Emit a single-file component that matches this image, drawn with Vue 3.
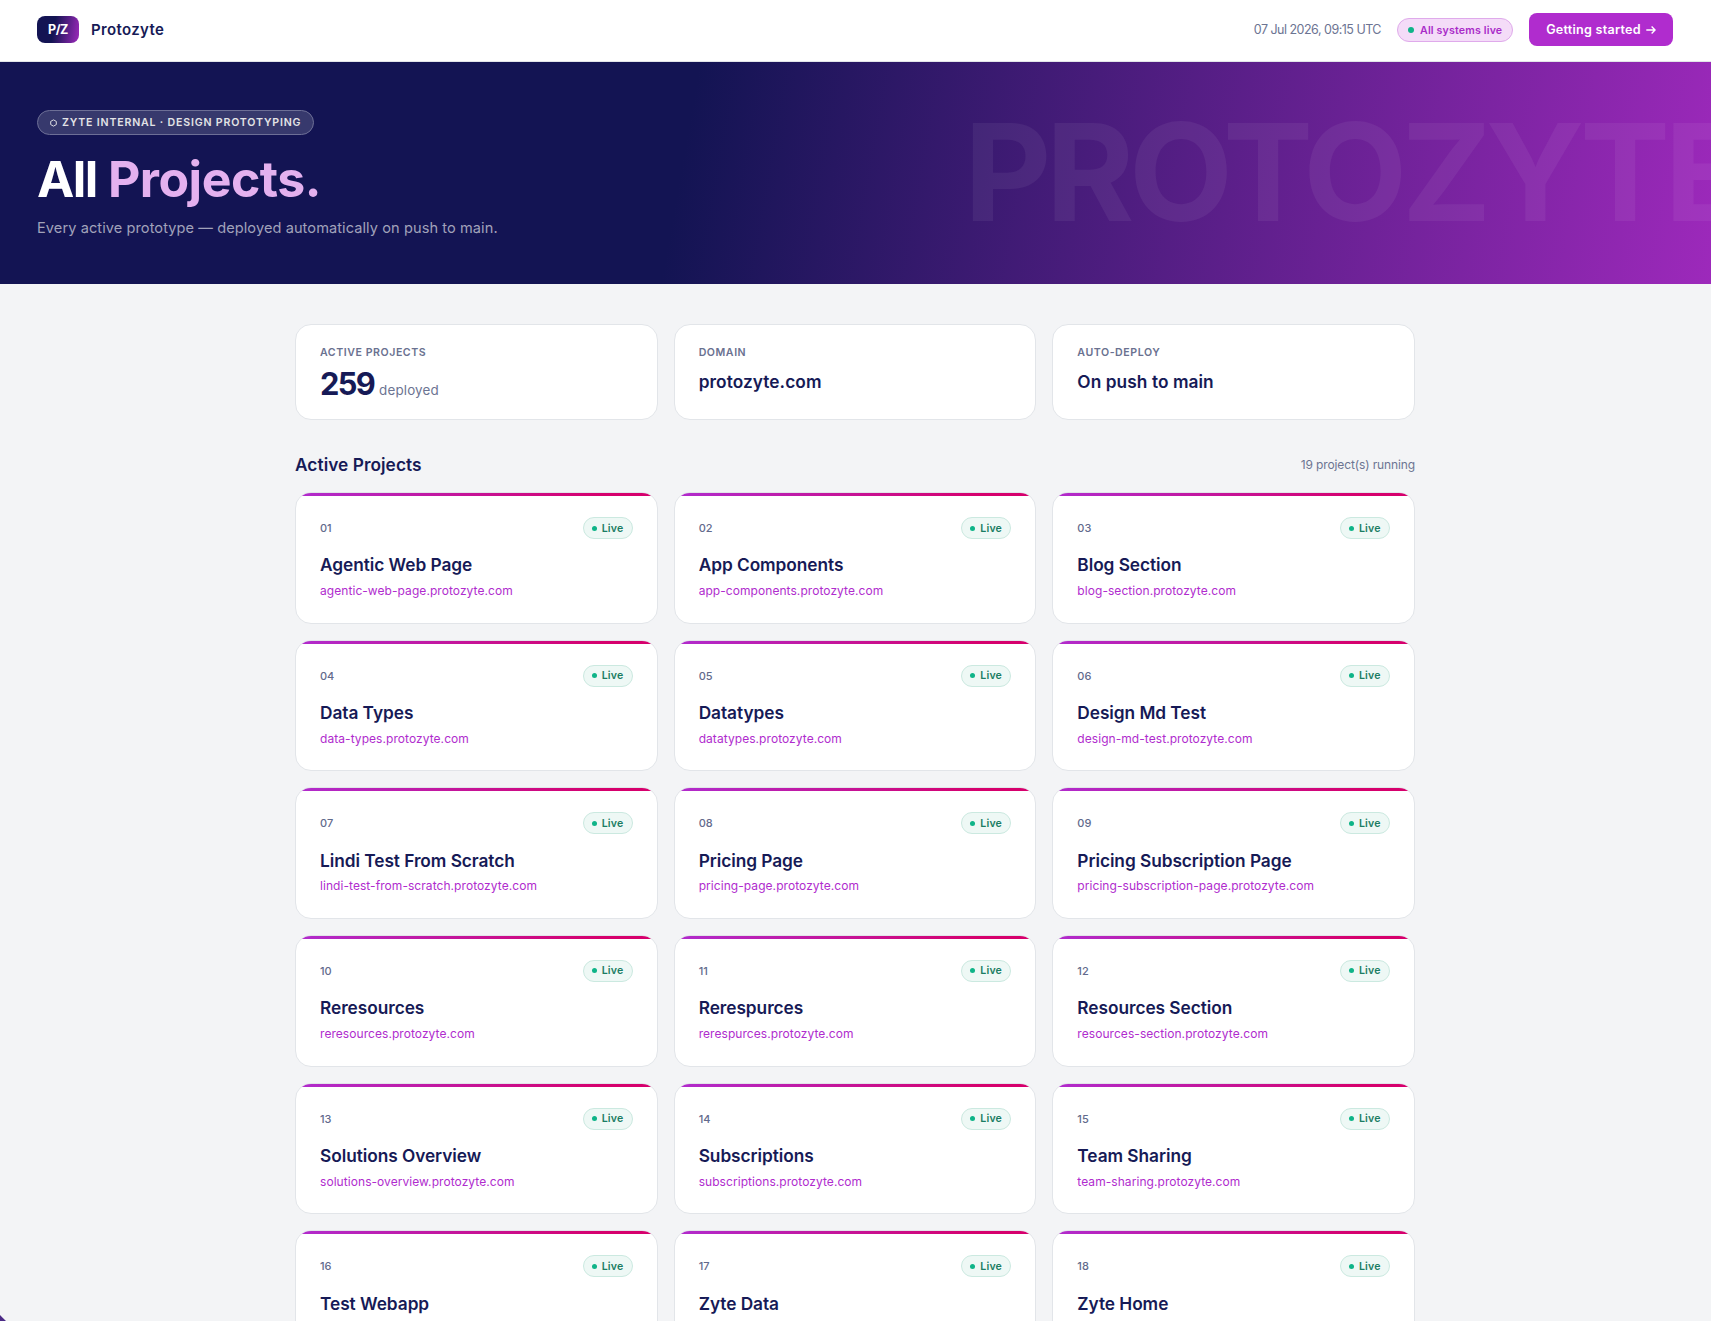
<template>
  <div class="page">
    <header class="topbar">
      <div class="brand">
        <span class="logo"><span>P/Z</span></span>
        <span class="brand-name">Protozyte</span>
      </div>
      <div class="topbar-right">
        <span class="date">07 Jul 2026, 09:15 UTC</span>
        <span class="systems"><i class="dot"></i><span>All systems live</span></span>
        <button class="start-btn">
          <span>Getting started</span>
          <svg width="10" height="10" viewBox="0 0 10 10" fill="none" stroke="currentColor" stroke-width="1.4">
            <path d="M0.3 5H9M5.6 1.5L9.1 5L5.6 8.5" />
          </svg>
        </button>
      </div>
    </header>

    <section class="hero">
      <div class="watermark">PROTOZYTE</div>
      <div class="eyebrow">
        <svg width="7" height="8" viewBox="0 0 8 9" fill="none" stroke="currentColor" stroke-width="1.1">
          <path d="M4 0.9L7.2 2.7V6.3L4 8.1L0.8 6.3V2.7Z" />
        </svg>
        <span>ZYTE INTERNAL · DESIGN PROTOTYPING</span>
      </div>
      <h1>All <em>Projects.</em></h1>
      <p>Every active prototype — deployed automatically on push to main.</p>
    </section>

    <main class="content">
      <div class="stats">
        <div class="stat">
          <div class="stat-label">ACTIVE PROJECTS</div>
          <div class="stat-number">259 <small>deployed</small></div>
        </div>
        <div class="stat">
          <div class="stat-label">DOMAIN</div>
          <div class="stat-text">protozyte.com</div>
        </div>
        <div class="stat">
          <div class="stat-label">AUTO-DEPLOY</div>
          <div class="stat-text">On push to main</div>
        </div>
      </div>

      <div class="section-head">
        <h2>Active Projects</h2>
        <span>19 project(s) running</span>
      </div>

      <div class="projects">
        <article v-for="(p, i) in projects" :key="p.slug" class="card">
          <div class="card-top">
            <span class="num">{{ String(i + 1).padStart(2, "0") }}</span>
            <span class="live"><i class="dot"></i><span>Live</span></span>
          </div>
          <h3>{{ p.name }}</h3>
          <a>{{ p.slug }}.protozyte.com</a>
        </article>
      </div>
    </main>

    <div class="corner"></div>
  </div>
</template>

<script setup>
const names = [
  "Agentic Web Page",
  "App Components",
  "Blog Section",
  "Data Types",
  "Datatypes",
  "Design Md Test",
  "Lindi Test From Scratch",
  "Pricing Page",
  "Pricing Subscription Page",
  "Reresources",
  "Rerespurces",
  "Resources Section",
  "Solutions Overview",
  "Subscriptions",
  "Team Sharing",
  "Test Webapp",
  "Zyte Data",
  "Zyte Home",
];

// subdomain is the dashed project name
const projects = names.map((name) => ({
  name,
  slug: name.toLowerCase().replace(/ /g, "-"),
}));
</script>

<style>
body {
  margin: 0;
  background: #f3f4f6;
}
</style>

<style scoped>
.page {
  position: relative;
  height: 1321px;
  overflow: hidden;
  background: #f3f4f6;
  color: #161a56;
  font-family: Inter, "Liberation Sans", sans-serif;
}

.page * {
  box-sizing: border-box;
}

.topbar {
  display: flex;
  align-items: flex-start;
  justify-content: space-between;
  height: 62px;
  padding: 13px 38px 0 37px;
  background: #fff;
  border-bottom: 1px solid #e2e5e9;
}

.brand {
  display: flex;
  align-items: center;
  gap: 12px;
  height: 33px;
}

.logo {
  display: flex;
  align-items: center;
  justify-content: center;
  width: 42px;
  height: 27px;
  border-radius: 8px;
  background: linear-gradient(100deg, #131453 40%, #9d29bb 100%);
  color: #fff;
  font-size: 12.5px;
  font-weight: 700;
  letter-spacing: -0.5px;
}

.brand-name {
  font-size: 15px;
  font-weight: 600;
  letter-spacing: 0.35px;
}

.topbar-right {
  display: flex;
  align-items: center;
  height: 33px;
}

.date {
  margin-right: 16px;
  color: #6c7492;
  font-size: 12.5px;
  letter-spacing: -0.51px;
}

.dot {
  width: 6px;
  height: 6px;
  border-radius: 50%;
  background: #0fb488;
}

.systems {
  display: flex;
  align-items: center;
  gap: 6px;
  width: 116px;
  height: 24px;
  margin-top: 1px;
  margin-right: 16px;
  padding-left: 10px;
  border: 1px solid #dfaaeb;
  border-radius: 12px;
  background: #f4dcf8;
  color: #a92bc8;
  font-size: 10.6px;
  font-weight: 600;
  letter-spacing: 0.17px;
  white-space: nowrap;
}

.start-btn {
  display: flex;
  align-items: center;
  justify-content: center;
  gap: 5px;
  width: 144px;
  height: 33px;
  padding: 0;
  border: none;
  border-radius: 8px;
  background: #b02cce;
  color: #fff;
  font-family: inherit;
  font-size: 12.6px;
  font-weight: 600;
  letter-spacing: 0.25px;
}

.hero {
  position: relative;
  height: 222px;
  padding: 48px 37px 0;
  overflow: hidden;
  background: linear-gradient(100deg, #131453 40%, #9d29bb 100%);
}

.watermark {
  position: absolute;
  top: 40px;
  left: 964px;
  color: rgba(255, 255, 255, 0.06);
  font-size: 135px;
  font-weight: 700;
  line-height: 140px;
  letter-spacing: -5.6px;
  white-space: nowrap;
}

.eyebrow {
  display: flex;
  align-items: center;
  gap: 5px;
  width: 277px;
  height: 25px;
  padding-left: 12px;
  border: 1px solid #6d6f96;
  border-radius: 13px;
  background: #37396d;
  color: #e3e3e6;
  font-size: 10.6px;
  font-weight: 600;
  letter-spacing: 0.82px;
  white-space: nowrap;
}

.hero h1 {
  margin: 16px 0 0;
  color: #fff;
  font-size: 50px;
  font-weight: 700;
  line-height: 56px;
  letter-spacing: -1.6px;
}

.hero h1 em {
  margin-left: 1px;
  color: #e4b1ef;
  font-style: normal;
  letter-spacing: -0.5px;
}

.hero p {
  margin: 9px 0 0;
  color: #a1a2ba;
  font-size: 14.6px;
  line-height: 24px;
  letter-spacing: 0.07px;
}

.content {
  width: 1120px;
  margin: 0 296px 0 295px;
  padding-top: 40px;
}

.stats {
  display: grid;
  grid-template-columns: repeat(3, 1fr);
  gap: 16px;
}

.stat {
  height: 96px;
  padding: 20px 24px 0;
  border: 1px solid #e2e5e9;
  border-radius: 16px;
  background: #fff;
}

.stat-label {
  color: #6a7190;
  font-size: 10.6px;
  font-weight: 600;
  line-height: 16px;
  letter-spacing: 0.55px;
}

.stat-number {
  margin-top: 5px;
  font-size: 30.8px;
  font-weight: 700;
  line-height: 36px;
  letter-spacing: -1.7px;
}

.stat-number small {
  margin-left: -0.5px;
  color: #6c7492;
  font-size: 13.4px;
  font-weight: 400;
  letter-spacing: 0.15px;
}

.stat-text {
  margin-top: 9px;
  font-size: 17.3px;
  font-weight: 600;
  line-height: 24px;
  letter-spacing: 0.07px;
}

.section-head {
  display: flex;
  align-items: center;
  justify-content: space-between;
  height: 24px;
  margin: 32px 0 16px;
}

.section-head h2 {
  margin: 0;
  font-size: 17.3px;
  font-weight: 600;
  letter-spacing: 0.05px;
}

.section-head span {
  color: #6c7492;
  font-size: 12px;
  letter-spacing: -0.12px;
}

.projects {
  display: grid;
  grid-template-columns: repeat(3, 1fr);
  grid-auto-rows: 131.65px;
  gap: 16px;
}

.card {
  position: relative;
  padding: 24px;
  overflow: hidden;
  border: 1px solid #e2e5e9;
  border-radius: 16px;
  background: #fff;
}

/* coloured strip clipped by the card radius */
.card::before {
  content: "";
  position: absolute;
  top: 0;
  left: 0;
  right: 0;
  height: 3px;
  background: linear-gradient(90deg, #b02cce, #d6006d 85%);
}

.card-top {
  display: flex;
  align-items: center;
  justify-content: space-between;
  height: 22px;
}

.num {
  color: #626a8c;
  font-size: 11px;
  font-weight: 500;
}

.live {
  display: flex;
  align-items: center;
  gap: 5px;
  width: 50px;
  height: 22px;
  padding-left: 8px;
  border: 1px solid #cbe9e0;
  border-radius: 11px;
  background: #eef8f5;
  color: #1b7d63;
  font-size: 10.6px;
  font-weight: 600;
  letter-spacing: 0.15px;
}

.live .dot {
  width: 5px;
  height: 5px;
}

.card h3 {
  margin: 14.4px 0 4.6px;
  font-size: 17.3px;
  font-weight: 600;
  line-height: 24px;
  letter-spacing: -0.05px;
}

.card a {
  display: block;
  color: #b02cce;
  font-size: 12px;
  line-height: 18px;
  letter-spacing: 0.06px;
}

.corner {
  position: absolute;
  left: 0;
  bottom: 0;
  width: 6px;
  height: 6px;
  background: #4b2a86;
  clip-path: polygon(0 0, 40% 40%, 100% 100%, 0 100%);
}
</style>
